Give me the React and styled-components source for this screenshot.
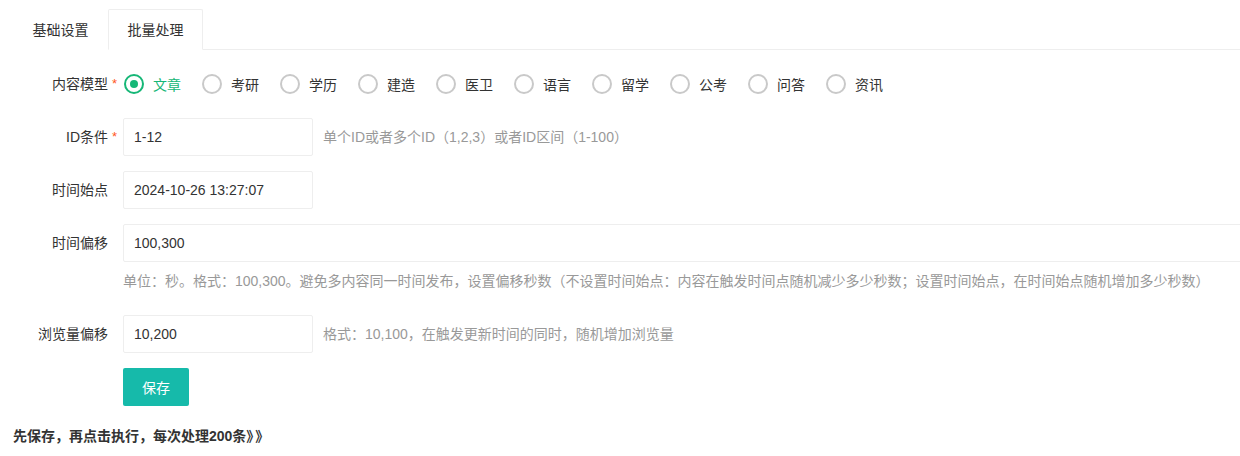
import styled, { createGlobalStyle } from "styled-components";

const GlobalStyle = createGlobalStyle`
  html, body {
    margin: 0;
    padding: 0;
    background: #fff;
    overflow: hidden;
  }
  body {
    font-family: "Liberation Sans", "Noto Sans CJK SC", sans-serif;
    font-size: 14px;
    color: #333;
  }
  * { box-sizing: border-box; }
`;

const Page = styled.div`
  padding: 9px 0 0 13px;
  margin-right: -20px;
`;

const TabTitle = styled.ul`
  display: flex;
  margin: 0;
  padding: 0;
  list-style: none;
  height: 41px;
  border-bottom: 1px solid #eee;
`;

const Tab = styled.li`
  min-width: 95px;
  padding: 0 15px;
  height: 41px;
  line-height: 40px;
  text-align: center;
  color: #333;
  border: 1px solid ${(p) => (p.active ? "#eee" : "transparent")};
  border-bottom-color: ${(p) => (p.active ? "#fff" : "transparent")};
  border-radius: 2px 2px 0 0;
  background: #fff;
  cursor: pointer;
`;

const Content = styled.div`
  padding-top: 15px;
`;

const FormItem = styled.div`
  display: flex;
  align-items: flex-start;
  margin-bottom: 15px;
`;

const Label = styled.label`
  position: relative;
  flex: 0 0 110px;
  padding: 9px 15px;
  line-height: 20px;
  text-align: right;
  color: #333;
`;

const Required = styled.span`
  position: absolute;
  right: 6px;
  top: 9px;
  color: #ff5722;
  font-size: 13px;
`;

const Block = styled.div`
  flex: 1;
  min-width: 0;
`;

const Inline = styled.div`
  display: flex;
  align-items: center;
`;

const RadioGroup = styled.div`
  display: flex;
  align-items: center;
  height: 38px;
`;

const Radio = styled.div`
  display: flex;
  align-items: center;
  height: 28px;
  margin-right: 10px;
  padding-right: 10px;
  color: ${(p) => (p.checked ? "#16b777" : "#333")};
  cursor: pointer;
`;

const RadioIcon = styled.i`
  position: relative;
  width: 20px;
  height: 20px;
  margin: 0 9px 0 1px;
  border-radius: 50%;
  border: 2px solid ${(p) => (p.checked ? "#16b777" : "#c9c9c9")};

  &::after {
    content: "";
    display: ${(p) => (p.checked ? "block" : "none")};
    position: absolute;
    left: 4px;
    top: 4px;
    width: 8px;
    height: 8px;
    border-radius: 50%;
    background: #16b777;
  }
`;

const Input = styled.input`
  display: block;
  width: ${(p) => (p.wide ? "100%" : "190px")};
  height: 38px;
  padding: 0 10px;
  border: 1px solid #eee;
  border-radius: 2px;
  font-family: inherit;
  font-size: 14px;
  color: #333;
  outline: none;
  background: #fff;
`;

const Aux = styled.div`
  padding: 9px 0;
  margin-left: ${(p) => (p.below ? "0" : "10px")};
  line-height: 20px;
  color: #999;
  font-size: 14px;
  white-space: nowrap;
`;

const Button = styled.button`
  width: 66px;
  height: 38px;
  padding: 0;
  border: none;
  border-radius: 2px;
  background: #16baaa;
  color: #fff;
  font-family: inherit;
  font-size: 14px;
  cursor: pointer;
`;

const Note = styled.p`
  margin: 20px 0 0;
  font-weight: bold;
  font-size: 14px;
  line-height: 20px;
  color: #333;
`;

const Quote = styled.span`
  letter-spacing: 2px;
`;

const models = ["文章", "考研", "学历", "建造", "医卫", "语言", "留学", "公考", "问答", "资讯"];

const App = () => {
  return (
    <>
      <GlobalStyle />
      <Page>
        <TabTitle>
          <Tab>基础设置</Tab>
          <Tab active>批量处理</Tab>
        </TabTitle>
        <Content>
          <FormItem>
            <Label>
              内容模型<Required>*</Required>
            </Label>
            <Block>
              <RadioGroup>
                {models.map((m, i) => (
                  <Radio key={m} checked={i === 0}>
                    <RadioIcon checked={i === 0} />
                    {m}
                  </Radio>
                ))}
              </RadioGroup>
            </Block>
          </FormItem>

          <FormItem>
            <Label>
              ID条件<Required>*</Required>
            </Label>
            <Inline>
              <Input defaultValue="1-12" />
              <Aux>单个ID或者多个ID（1,2,3）或者ID区间（1-100）</Aux>
            </Inline>
          </FormItem>

          <FormItem>
            <Label>时间始点</Label>
            <Inline>
              <Input defaultValue="2024-10-26 13:27:07" />
            </Inline>
          </FormItem>

          <FormItem>
            <Label>时间偏移</Label>
            <Block>
              <Input wide defaultValue="100,300" />
              <Aux below>
                单位：秒。格式：100,300。避免多内容同一时间发布，设置偏移秒数（不设置时间始点：内容在触发时间点随机减少多少秒数；设置时间始点，在时间始点随机增加多少秒数）
              </Aux>
            </Block>
          </FormItem>

          <FormItem>
            <Label>浏览量偏移</Label>
            <Inline>
              <Input defaultValue="10,200" />
              <Aux>格式：10,100，在触发更新时间的同时，随机增加浏览量</Aux>
            </Inline>
          </FormItem>

          <FormItem>
            <Label />
            <Button>保存</Button>
          </FormItem>

          <Note>
            先保存，再点击执行，每次处理200条<Quote>》》</Quote>
          </Note>
        </Content>
      </Page>
    </>
  );
};

export default App;
